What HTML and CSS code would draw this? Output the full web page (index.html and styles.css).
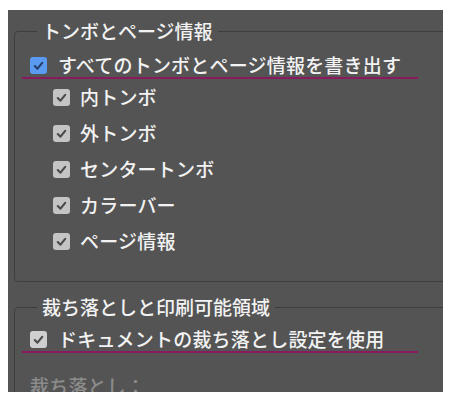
FILE: index.html
```html
<!DOCTYPE html>
<html lang="ja">
<head>
<meta charset="utf-8">
<link rel="stylesheet" href="styles.css">
</head>
<body>
<div class="panel">
  <fieldset class="group group-marks">
    <legend class="group-title">トンボとページ情報</legend>
    <div class="row row-main">
      <span class="cb cb-blue"><svg viewBox="0 0 16 16"><path d="M4.5 8.5 L7 11 L11.5 5.5"/></svg></span>
      <span class="label">すべてのトンボとページ情報を書き出す</span>
    </div>
    <div class="row row-sub">
      <span class="cb"><svg viewBox="0 0 16 16"><path d="M4.5 8.5 L7 11 L11.5 5.5"/></svg></span>
      <span class="label">内トンボ</span>
    </div>
    <div class="row row-sub">
      <span class="cb"><svg viewBox="0 0 16 16"><path d="M4.5 8.5 L7 11 L11.5 5.5"/></svg></span>
      <span class="label">外トンボ</span>
    </div>
    <div class="row row-sub">
      <span class="cb"><svg viewBox="0 0 16 16"><path d="M4.5 8.5 L7 11 L11.5 5.5"/></svg></span>
      <span class="label">センタートンボ</span>
    </div>
    <div class="row row-sub">
      <span class="cb"><svg viewBox="0 0 16 16"><path d="M4.5 8.5 L7 11 L11.5 5.5"/></svg></span>
      <span class="label">カラーバー</span>
    </div>
    <div class="row row-sub">
      <span class="cb"><svg viewBox="0 0 16 16"><path d="M4.5 8.5 L7 11 L11.5 5.5"/></svg></span>
      <span class="label">ページ情報</span>
    </div>
  </fieldset>
  <fieldset class="group group-bleed">
    <legend class="group-title">裁ち落としと印刷可能領域</legend>
    <div class="row row-main">
      <span class="cb cb-light"><svg viewBox="0 0 16 16"><path d="M4.5 8.5 L7 11 L11.5 5.5"/></svg></span>
      <span class="label">ドキュメントの裁ち落とし設定を使用</span>
    </div>
    <div class="row row-dim">
      <span class="label">裁ち落とし：</span>
    </div>
  </fieldset>
</div>
</body>
</html>
```

FILE: styles.css
```css
html, body {
  margin: 0;
  padding: 0;
  background: #ffffff;
}

body {
  font-family: "Noto Sans CJK JP", "Noto Sans", sans-serif;
  font-size: 19px;
  font-weight: 500;
  color: #f2f2f2;
}

.panel {
  margin: 10px 0 0 8px;
  width: 435px;
  height: 382px;
  background: #545454;
  overflow: hidden;
  padding-top: 11px;
  box-sizing: border-box;
}

.group {
  margin: 0 0 0 6px;
  padding: 0;
  width: 470px;
  box-sizing: border-box;
  border: 1px solid #3e3e3e;
  border-radius: 4px;
  min-width: 0;
}

.group-marks {
  padding-top: 12px;
  padding-bottom: 22px;
}

.group-bleed {
  margin-top: 15px;
  padding-top: 10px;
  padding-bottom: 40px;
}

.group-title {
  margin-left: 22px;
  padding: 0 5px;
  line-height: 19px;
  height: 20px;
  white-space: nowrap;
}

.row {
  display: flex;
  align-items: center;
  white-space: nowrap;
}

.row-main {
  height: 24px;
  margin-left: 7px;
  width: 388px;
  padding-left: 8px;
  box-sizing: content-box;
  border-bottom: 2px solid #8a1a5e;
  gap: 11px;
}

.row-sub {
  height: 36px;
  padding-left: 38px;
  gap: 10px;
}

.row-dim {
  margin-top: 21px;
  height: 24px;
  padding-left: 15px;
  color: #8c8c8c;
}

.label {
  line-height: 24px;
  letter-spacing: 0.2px;
}

.cb {
  width: 17px;
  height: 17px;
  border-radius: 3px;
  background: #c4c4c4;
  display: flex;
  flex: none;
}

.cb svg {
  width: 17px;
  height: 17px;
}

.cb path {
  fill: none;
  stroke: #4a4a4a;
  stroke-width: 2;
  stroke-linecap: round;
  stroke-linejoin: round;
}

.cb-blue {
  background: #5a9af0;
}

.cb-blue path {
  stroke: #24406a;
}

.cb-light {
  background: #cfcfcf;
}
```
